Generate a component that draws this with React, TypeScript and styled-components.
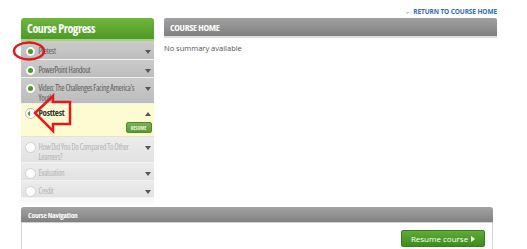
import React from "react";
import styled, { createGlobalStyle } from "styled-components";

const Global = createGlobalStyle`
  html, body { margin: 0; padding: 0; background: #fff; }
  body { width: 527px; height: 249px; overflow: hidden; font-family: Lato, "Open Sans", sans-serif; }
`;

const COND = `"Open Sans", sans-serif`;

const Page = styled.div`
  position: relative;
  width: 527px;
  height: 249px;
  overflow: hidden;
`;

const TopBar = styled.div`
  height: 18px;
  display: flex;
  justify-content: flex-end;
  align-items: center;
  padding-right: 30px;
  box-sizing: border-box;
  padding-top: 4px;
`;

const ReturnLink = styled.a`
  font-family: "Open Sans", sans-serif;
  font-size: 6.5px;
  font-weight: 700;
  color: #2f6db5;
  text-transform: uppercase;
  letter-spacing: -0.1px;
  text-decoration: none;
`;

const Columns = styled.div`
  display: flex;
  align-items: flex-start;
  padding-left: 21px;
  gap: 10px;
`;

const Sidebar = styled.div`
  width: 133px;
  height: 189px;
  overflow: hidden;
  position: relative;
  display: flex;
  flex-direction: column;
  &::after {
    content: "";
    position: absolute;
    left: 0;
    right: 0;
    bottom: 0;
    height: 10px;
    background: linear-gradient(rgba(255,255,255,0.5), #fff);
  }
`;

const SideHeader = styled.div`
  flex: none;
  height: 21px;
  border-radius: 3px 3px 0 0;
  background: linear-gradient(#6fb53d, #4e9a26);
  border-bottom: 2px solid #a5d47f;
  color: #fff;
  font-family: ${COND};
  font-stretch: 75%;
  font-weight: 700;
  font-size: 12px;
  letter-spacing: -0.4px;
  display: flex;
  align-items: center;
  padding-left: 6px;
`;

type RowKind = "done" | "current" | "todo";

const Row = styled.div<{ $kind: RowKind; $h: number }>`
  flex: none;
  min-height: ${(p) => p.$h}px;
  box-sizing: border-box;
  display: flex;
  align-items: flex-start;
  padding: ${(p) => (p.$kind === "current" ? "4px" : "5px")} 3.5px 0 3.5px;
  border-bottom: 1px solid ${(p) => (p.$kind === "current" ? "#e8e6c0" : "#f2f2f2")};
  background: ${(p) =>
    p.$kind === "done"
      ? "linear-gradient(#cbcbcb, #bdbdbd)"
      : p.$kind === "current"
      ? "#fdfbd2"
      : "linear-gradient(#ececec, #e2e2e2)"};
  position: relative;
`;

const Circle = styled.span<{ $kind: RowKind }>`
  flex: none;
  width: 9px;
  height: 9px;
  border-radius: 50%;
  background: #fff;
  border: 1px solid ${(p) => (p.$kind === "todo" ? "#d0d0d0" : "#bbb")};
  display: flex;
  align-items: center;
  justify-content: center;
  margin-right: 3px;
  &::after {
    content: "";
    display: ${(p) => (p.$kind === "todo" ? "none" : "block")};
    width: 5px;
    height: 5px;
    border-radius: 50%;
    background: ${(p) =>
      p.$kind === "current"
        ? "linear-gradient(90deg, #4a9a26 50%, #fff 50%)"
        : "#4a9a26"};
  }
`;

const Label = styled.span<{ $kind: RowKind }>`
  flex: 1;
  font-family: ${COND};
  font-stretch: 75%;
  font-size: 8px;
  line-height: 10px;
  letter-spacing: -0.3px;
  font-weight: ${(p) => (p.$kind === "current" ? 700 : 400)};
  color: ${(p) => (p.$kind === "done" ? "#5e5e5e" : p.$kind === "current" ? "#333" : "#b4b4b4")};
  ${(p) => (p.$kind === "current" ? "font-size: 9px;" : "")}
`;

const Caret = styled.span<{ $up?: boolean }>`
  flex: none;
  width: 0;
  height: 0;
  margin-top: 4px;
  border-left: 3.5px solid transparent;
  border-right: 3.5px solid transparent;
  ${(p) =>
    p.$up
      ? "border-bottom: 4px solid #555;"
      : "border-top: 4px solid #555;"}
`;

const RowBody = styled.div`
  flex: 1;
  display: flex;
  flex-direction: column;
`;

const RowLine = styled.div`
  display: flex;
  align-items: flex-start;
`;

const SmallResume = styled.button`
  align-self: flex-end;
  margin: 3px -1px 0 0;
  width: 26px;
  height: 11px;
  padding: 0;
  border: 1px solid #4f8a2e;
  border-radius: 2px;
  background: linear-gradient(#79b255, #5c9a38);
  color: #e8f3dc;
  font-family: ${COND};
  font-stretch: 75%;
  font-size: 5px;
  font-weight: 700;
`;

const Main = styled.div`
  width: 333px;
  display: flex;
  flex-direction: column;
`;

const MainHeader = styled.div`
  height: 18px;
  border-radius: 2px 2px 0 0;
  background: linear-gradient(#a2a2a2, #7f7f7f);
  border-bottom: 2px solid #dcdcdc;
  color: #fff;
  font-family: ${COND};
  font-stretch: 75%;
  font-weight: 700;
  font-size: 9.5px;
  letter-spacing: -0.3px;
  display: flex;
  align-items: center;
  padding-left: 6px;
`;

const Summary = styled.p`
  margin: 5px 0 0 0;
  font-family: "Open Sans", sans-serif;
  font-size: 7.5px;
  color: #555;
`;

const NavPanel = styled.div`
  margin: 0 0 0 21px;
  width: 472px;
  border: 1px solid #d6d6d6;
  border-top: none;
  border-radius: 3px 3px 0 0;
  box-sizing: border-box;
`;

const NavHeader = styled.div`
  height: 15px;
  margin: 0 -1px;
  border-radius: 3px 3px 0 0;
  background: linear-gradient(#a3a3a3, #808080);
  border-bottom: 1px solid #d0d0d0;
  color: #fff;
  font-family: ${COND};
  font-stretch: 75%;
  font-weight: 700;
  font-size: 7.5px;
  letter-spacing: -0.2px;
  display: flex;
  align-items: center;
  padding-left: 7px;
`;

const NavBody = styled.div`
  display: flex;
  justify-content: flex-end;
  padding: 7px 7px 10px 0;
`;

const ResumeButton = styled.button`
  width: 84px;
  height: 17px;
  border: 1px solid #3b7c20;
  border-radius: 2px;
  background: linear-gradient(#5cac35, #3f8c1e);
  color: #fff;
  font-family: "Open Sans", sans-serif;
  font-size: 8px;
  display: flex;
  align-items: center;
  justify-content: center;
  gap: 3px;
  padding: 0;
`;

const Annot = styled.svg`
  position: absolute;
  left: 0;
  top: 0;
  pointer-events: none;
`;

type Item = { title: string; kind: RowKind; h: number };

const items: Item[] = [
  { title: "Pretest", kind: "done", h: 19 },
  { title: "PowerPoint Handout", kind: "done", h: 18 },
  { title: "Video: The Challenges Facing America's Youth", kind: "done", h: 26 },
  { title: "Posttest", kind: "current", h: 33 },
  { title: "How Did You Do Compared To Other Learners?", kind: "todo", h: 25 },
  { title: "Evaluation", kind: "todo", h: 18 },
  { title: "Credit", kind: "todo", h: 18 },
  { title: "", kind: "todo", h: 18 },
];

export default function App() {
  return (
    <Page>
      <Global />
      <TopBar>
        <ReturnLink href="#">← Return to course home</ReturnLink>
      </TopBar>
      <Columns>
        <Sidebar>
          <SideHeader>Course Progress</SideHeader>
          {items.map((it, i) =>
            it.kind === "current" ? (
              <Row key={i} $kind={it.kind} $h={it.h}>
                <RowBody>
                  <RowLine>
                    <Circle $kind={it.kind} />
                    <Label $kind={it.kind}>{it.title}</Label>
                    <Caret $up />
                  </RowLine>
                  <SmallResume>RESUME</SmallResume>
                </RowBody>
              </Row>
            ) : (
              <Row key={i} $kind={it.kind} $h={it.h}>
                <Circle $kind={it.kind} />
                <Label $kind={it.kind}>{it.title}</Label>
                {it.title && <Caret />}
              </Row>
            )
          )}
        </Sidebar>
        <Main>
          <MainHeader>COURSE HOME</MainHeader>
          <Summary>No summary available</Summary>
        </Main>
      </Columns>
      <NavPanel>
        <NavHeader>Course Navigation</NavHeader>
        <NavBody>
          <ResumeButton>
            Resume course
            <svg width="4" height="6" viewBox="0 0 4 6">
              <path d="M0 0 L4 3 L0 6 Z" fill="#fff" />
            </svg>
          </ResumeButton>
        </NavBody>
      </NavPanel>
      <Annot width="527" height="249" viewBox="0 0 527 249">
        <ellipse cx="29" cy="51" rx="15" ry="8.5" fill="none" stroke="#e01b1b" strokeWidth="2.5" />
        <path
          d="M35 113 L53 96 L53 102 L70 102 L70 124 L53 124 L53 131 Z"
          fill="none"
          stroke="#e01b1b"
          strokeWidth="2.5"
          strokeLinejoin="miter"
        />
      </Annot>
    </Page>
  );
}
